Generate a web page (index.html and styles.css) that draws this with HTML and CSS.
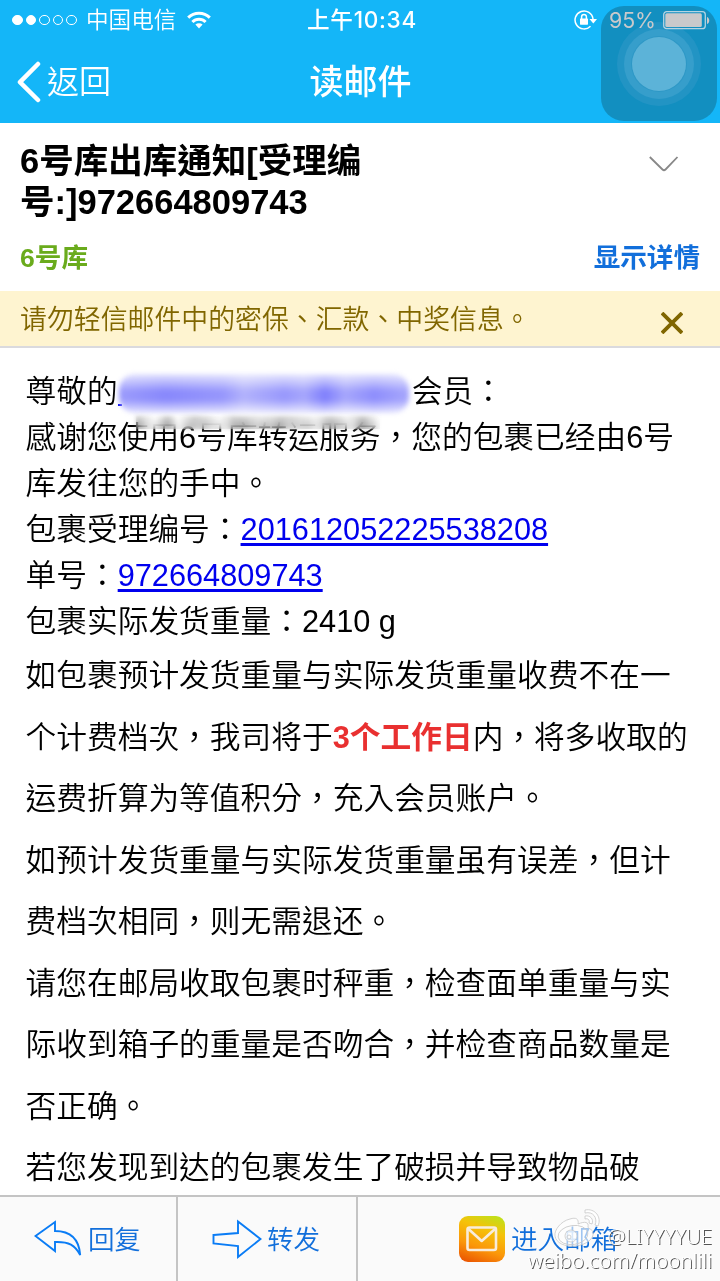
FILE: index.html
```html
<!DOCTYPE html>
<html lang="zh-TW">

<head>
    <meta charset="UTF-8">
    <meta name="viewport" content="width=device-width, initial-scale=1.0">
    <title>读邮件</title>
    <link rel="stylesheet" href="styles.css">
</head>

<body>
    <div id="container">
        <header>
            <div id="status">
                <div class="carrier">
                    <div class="dots">
                        <i class="dot on"></i>
                        <i class="dot on"></i>
                        <i class="dot"></i>
                        <i class="dot"></i>
                        <i class="dot"></i>
                    </div>
                    <span>中国电信</span>
                    <svg class="wifi" width="24" height="18" viewBox="0 0 24 18" fill="none" stroke="#fff" stroke-width="3">
                        <path d="M1.2 6.6a15.4 15.4 0 0 1 21.6 0" />
                        <path d="M5.4 11a9.4 9.4 0 0 1 13.2 0" />
                        <path d="M12 17.4l-3.6-3.8a5.2 5.2 0 0 1 7.2 0z" fill="#fff" stroke="none" />
                    </svg>
                </div>
                <div class="time">上午10:34</div>
                <div class="power">
                    <svg class="lock" width="24" height="20" viewBox="0 0 24 20" fill="none" stroke="#fff">
                        <path d="M16.5 16.2A9 9 0 1 1 19 9" stroke-width="1.5" />
                        <path d="M15.5 9h7.5l-3.7 4.6z" fill="#fff" stroke="none" />
                        <rect x="6" y="8.5" width="8" height="6.2" rx="0.6" fill="#fff" stroke="none" />
                        <path d="M7.6 9V6.8a2.4 2.4 0 0 1 4.8 0V9" stroke-width="1.5" />
                    </svg>
                    <span>95%</span>
                    <svg class="battery" width="47" height="19" viewBox="0 0 47 19">
                        <rect x="0.7" y="0.7" width="41.6" height="17" rx="3" fill="none" stroke="#b4d4e2" stroke-width="1.3" />
                        <rect x="2.3" y="2.3" width="36.5" height="13.8" rx="1.5" fill="#c9c9cb" />
                        <path d="M44 6c3 1 3 6 0 7z" fill="#c9c9cb" />
                    </svg>
                </div>
            </div>
            <div id="nav">
                <div class="back">
                    <svg width="24" height="42" viewBox="0 0 24 42" fill="none" stroke="#fff" stroke-width="4.5" stroke-linecap="round" stroke-linejoin="round">
                        <path d="M21 3L3 21.2L21 39" />
                    </svg>
                    <span>返回</span>
                </div>
                <h1>读邮件</h1>
            </div>
            <!-- assistive touch -->
            <div id="touch"><div class="ring"></div></div>
        </header>

        <section id="subject">
            <div class="row">
                <h2>6号库出库通知[受理编号:]972664809743</h2>
                <svg width="30" height="16" viewBox="0 0 30 16" fill="none" stroke="#888" stroke-width="1.8">
                    <path d="M0.8 1L13.5 13.5Q15 15 16.5 13.5L28.5 1" />
                </svg>
            </div>
            <div class="row from">
                <span class="sender">6号库</span>
                <span class="detail">显示详情</span>
            </div>
        </section>

        <section id="notice">
            <p>请勿轻信邮件中的密保、汇款、中奖信息。</p>
            <svg width="22" height="22" viewBox="0 0 22 22" stroke="#806600" stroke-width="3.8">
                <path d="M1 1L21 21M21 1L1 21" />
            </svg>
        </section>

        <main>
            <div class="info">
                <p>尊敬的<span class="hidden-mail"><i></i></span>会员：</p>
                <p>感谢您使用6号库转运服务，您的包裹已经由6号库发往您的手中。</p>
                <p>包裹受理编号：<a href="#">201612052225538208</a></p>
                <p>单号：<a href="#">972664809743</a></p>
                <p>包裹实际发货重量：2410 g</p>
            </div>
            <div class="text">
                <p>如包裹预计发货重量与实际发货重量收费不在一个计费档次，我司将于<b>3个工作日</b>内，将多收取的运费折算为等值积分，充入会员账户。</p>
                <p>如预计发货重量与实际发货重量虽有误差，但计费档次相同，则无需退还。</p>
                <p>请您在邮局收取包裹时秤重，检查面单重量与实际收到箱子的重量是否吻合，并检查商品数量是否正确。</p>
                <p>若您发现到达的包裹发生了破损并导致物品破</p>
            </div>
        </main>

        <footer>
            <div class="tool reply">
                <svg width="48" height="38" viewBox="0 0 48 38" fill="none" stroke="#0a7cf5" stroke-width="1.9">
                    <path d="M1.5 16L21 2V11C36 11 45 19 46.2 35C41 25 35 21.5 21 22V31Z" />
                </svg>
                <span>回复</span>
            </div>
            <div class="tool forward">
                <svg width="50" height="40" viewBox="0 0 50 40" fill="none" stroke="#0a7cf5" stroke-width="1.9">
                    <path d="M1.5 16L26 14V2.5L48.5 20L26 38V27L1.5 24.5Z" />
                </svg>
                <span>转发</span>
            </div>
            <div class="tool inbox">
                <div class="mail-icon">
                    <svg width="32" height="26" viewBox="0 0 32 26" fill="none" stroke="#f8ecdc" stroke-width="2.6" stroke-linejoin="round">
                        <rect x="1.5" y="1.5" width="28.5" height="22.5" rx="2" />
                        <path d="M2.5 3L15.7 15L29 3" />
                    </svg>
                </div>
                <span>进入邮箱</span>
            </div>
            <div id="mark">
                <svg width="48" height="42" viewBox="0 0 48 42" fill="none" stroke="#c8c8c8" stroke-width="0.8">
                    <path d="M17 12C8 14 1 23 2 29C3 36 12 40 22 39C34 38 41 31 40 26C40 22 35 22 35 20C36 15 32 14 25 17C26 12 23 10 17 12Z" fill="#fff" fill-opacity="0.6" />
                    <ellipse cx="20" cy="28" rx="15" ry="9.5" transform="rotate(-8 20 28)" />
                    <circle cx="18" cy="29" r="6" fill="#fff" fill-opacity="0.6" />
                    <circle cx="16" cy="30" r="2" />
                    <path d="M32 3C42 1 49 10 45 19L42 18C45 11 40 4 32 6Z" fill="#fff" />
                    <path d="M32 9C37 8 41 12 39 17L36 16C37 13 35 11 32 12Z" fill="#fff" />
                </svg>
                <p class="name">@LIYYYYUE</p>
                <p class="site">weibo.com/moonlili</p>
            </div>
        </footer>
    </div>
</body>

</html>
```
FILE: styles.css
```css
* {
    margin: 0;
    padding: 0;
    box-sizing: border-box;
}

body {
    font-family: "Liberation Sans", "Noto Sans CJK TC", sans-serif;
    color: #000;
    background: #fff;
}

svg {
    display: block;
    flex: none;
}

#container {
    width: 720px;
    height: 1281px;
    overflow: hidden;
    display: flex;
    flex-direction: column;
}

header {
    position: relative;
    height: 123px;
    flex: none;
    background: #14b6f8;
    color: #fff;
}

#status {
    position: relative;
    z-index: 1;
    height: 40px;
    padding: 0 10px 0 12px;
    display: grid;
    grid-template-columns: 1fr auto 1fr;
    align-items: center;
    font-family: Inter, "Noto Sans CJK TC", sans-serif;
    font-size: 22.6px;
    line-height: 40px;
}

.carrier,
.power,
.dots {
    display: flex;
    align-items: center;
}

.carrier span {
    margin-left: 9px;
    font-weight: 350;
}

.dots {
    gap: 3px;
}

.dot {
    width: 10.6px;
    height: 10.6px;
    border: 1px solid #fff;
    border-radius: 50%;
}

.dot.on {
    background: #fff;
}

.wifi {
    margin-left: 11px;
}

.time {
    margin-left: 2px;
    font-weight: 500;
    letter-spacing: 0.7px;
}

.power {
    justify-content: flex-end;
}

.power span {
    margin: 0 7px 0 12px;
    font-size: 21.3px;
    color: #c9c9cb;
}

.power .lock {
    margin-right: -1px;
}

#nav {
    height: 83px;
    padding-left: 17px;
    display: grid;
    grid-template-columns: 1fr auto 1fr;
    align-items: center;
}

.back {
    display: flex;
    align-items: center;
    gap: 6px;
    font-size: 32px;
    font-weight: 350;
    line-height: 40px;
}

#nav h1 {
    margin-left: -16px;
    font-size: 34px;
    font-weight: 500;
    line-height: 40px;
}

#touch {
    position: absolute;
    top: 6px;
    left: 601px;
    width: 116px;
    height: 115px;
    border-radius: 23px;
    background: #128fc0;
    display: flex;
    justify-content: center;
}

.ring {
    width: 54px;
    height: 54px;
    margin-top: 31px;
    border-radius: 50%;
    background: #5cb3d8;
    box-shadow: 0 0 0 1px #2e98c6, 0 0 0 8px #369ecb, 0 0 0 15px #2294c4;
}

#subject {
    height: 168px;
    padding: 18px 20px 0 20px;
    flex: none;
}

.row {
    display: flex;
    justify-content: space-between;
}

.row h2 {
    width: 350px;
    font-size: 34.5px;
    line-height: 41px;
    font-weight: bold;
}

.row svg {
    margin: 15px 21px 0 0;
}

.from {
    margin-top: 16px;
    font-size: 26.6px;
    line-height: 38px;
    font-weight: bold;
}

.sender {
    color: #6aab1c;
}

.detail {
    color: #126fdb;
}

#notice {
    height: 57px;
    flex: none;
    padding: 0 37px 0 20px;
    display: flex;
    align-items: center;
    justify-content: space-between;
    background: #fef4d0;
    border-bottom: 2px solid #dadade;
    color: #806600;
    font-size: 26.88px;
    font-weight: 350;
}

#notice p {
    margin-top: -3px;
}

#notice svg {
    margin-top: 9px;
}

main {
    flex: 1;
    min-height: 0;
    overflow: hidden;
    padding: 21px 20px 0 25.5px;
    font-size: 30.72px;
    font-weight: 350;
}

.info {
    line-height: 46.08px;
}

.text {
    line-height: 61.44px;
}

main a {
    color: #00e;
    text-underline-offset: 3px;
}

main b {
    color: #e93030;
    font-weight: bold;
}

/* smeared mail address */
.hidden-mail {
    position: relative;
    display: inline-block;
    width: 294px;
    height: 30px;
    vertical-align: middle;
}

.hidden-mail i {
    position: absolute;
    top: -5px;
    left: 1px;
    width: 290px;
    height: 39px;
    border-radius: 16px;
    background: linear-gradient(rgba(255, 255, 255, 0.8), rgba(255, 255, 255, 0.15) 45%, rgba(255, 255, 255, 0.15) 65%, rgba(255, 255, 255, 0.8)), linear-gradient(90deg, #8b8bfc, #7373fc 16%, #8585fc 36%, #a5a5fb 43%, #8686fc 57%, #9797fb 64%, #6969fc 71%, #9797fb 78%, #7a7afc 88%, #9898fc);
    filter: blur(2.5px);
}

.hidden-mail::before {
    content: "";
    position: absolute;
    top: 25px;
    left: 0;
    width: 4px;
    height: 2px;
    background: #00e;
}

.hidden-mail::after {
    content: "";
    position: absolute;
    z-index: 1;
    top: 37px;
    left: 18px;
    width: 244px;
    height: 13px;
    background: linear-gradient(90deg, rgba(150, 150, 150, 0.5), rgba(255, 255, 255, 0.6) 8%, rgba(150, 150, 150, 0.5) 13%, rgba(255, 255, 255, 0.5) 17%, rgba(150, 150, 150, 0.5) 24%, rgba(255, 255, 255, 0.6) 34%, rgba(160, 160, 160, 0.5) 40%, rgba(210, 210, 210, 0.5) 52%, rgba(160, 160, 160, 0.5) 60%, rgba(235, 235, 235, 0.5) 73%, rgba(170, 170, 170, 0.5) 80%, rgba(240, 240, 240, 0.5) 86%, rgba(150, 150, 150, 0.5) 93%, rgba(255, 255, 255, 0.5));
    backdrop-filter: blur(3px);
    filter: blur(2px);
}

footer {
    position: relative;
    height: 86px;
    flex: none;
    display: flex;
    border-top: 2px solid #c4c4c4;
    background: #fafafa;
    color: #126fdb;
    font-size: 26.6px;
    font-weight: 350;
}

.tool {
    display: flex;
    align-items: center;
    gap: 6px;
}

.tool span {
    margin-top: -3px;
}

.reply {
    width: 178px;
    padding-left: 34px;
    border-right: 2px solid #c4c4c4;
}

.forward {
    width: 180px;
    padding-left: 34px;
    border-right: 2px solid #c4c4c4;
    gap: 5px;
}

.inbox {
    padding-left: 101px;
}

.mail-icon {
    width: 46px;
    height: 46px;
    border-radius: 9px;
    display: flex;
    align-items: center;
    justify-content: center;
    background: linear-gradient(200deg, #b5e61d 0%, #f5c20a 32%, #fb970a 65%, #e84c00 100%);
}

/* watermark over the toolbar */
#mark {
    position: absolute;
    top: 9px;
    right: 8px;
    width: 186px;
    height: 76px;
    color: #fff;
    font-family: "Noto Sans", sans-serif;
    font-weight: 300;
    text-shadow: 1px 1px 0 #555;
}

#mark svg {
    position: absolute;
    top: 1px;
    left: 27px;
}

#mark .name {
    position: absolute;
    top: 18px;
    right: 0;
    font-size: 20.4px;
    line-height: 24px;
}

#mark .site {
    position: absolute;
    top: 42px;
    right: 0;
    font-size: 20.8px;
    line-height: 24px;
}
```
